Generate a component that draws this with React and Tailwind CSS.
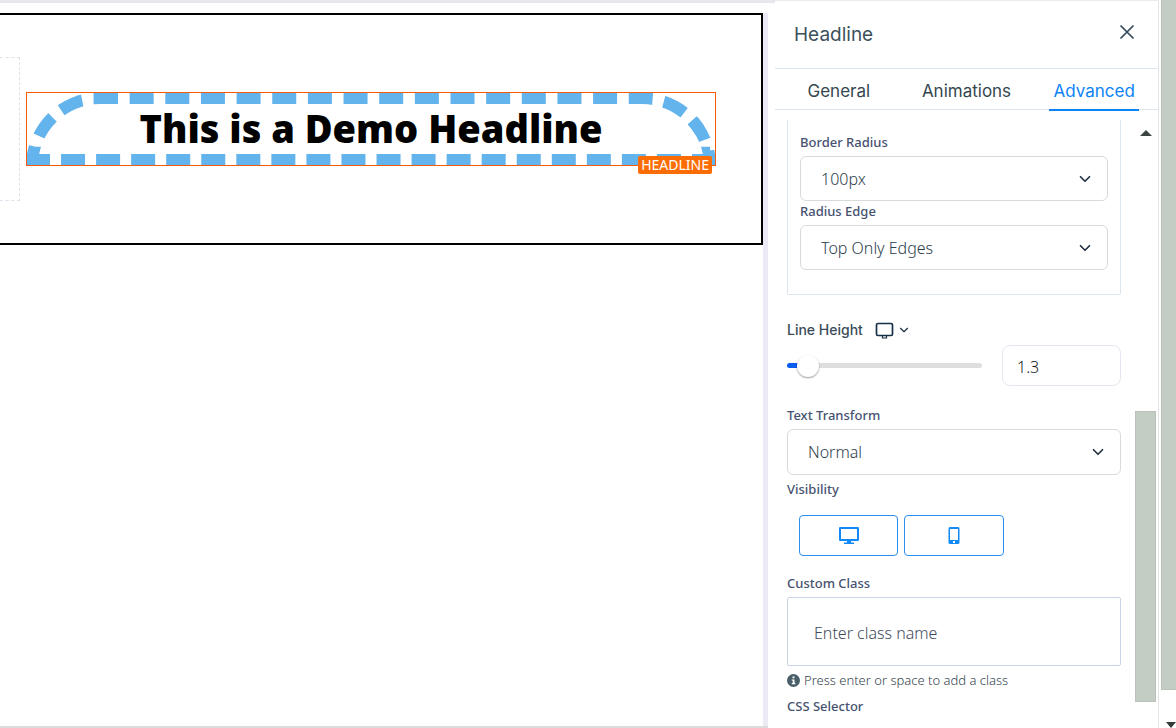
import React, { useState } from 'react';
import { ChevronDown } from 'lucide-react';
import clsx from 'clsx';

const TABS = ['General', 'Animations', 'Advanced'];

function Label({ htmlFor, children }) {
  return (
    <label htmlFor={htmlFor} className="block h-5 text-[13px] leading-5 font-medium text-[#465270]">
      {children}
    </label>
  );
}

function SelectField({ id, label, options, tall }) {
  return (
    <div>
      <Label htmlFor={id}>{label}</Label>
      <div className="relative mt-1">
        <select
          id={id}
          className={clsx(
            'block w-full appearance-none rounded-md border border-[#d9dadc] bg-white pr-12 pl-5 text-base font-light text-[#2c404c]',
            tall ? 'h-[46px]' : 'h-[45px]'
          )}
        >
          {options.map((option) => (
            <option key={option}>{option}</option>
          ))}
        </select>
        <ChevronDown className="pointer-events-none absolute top-3.5 right-3.5 h-[18px] w-[18px] text-[#1f2f3f]" strokeWidth={2.2} />
      </div>
    </div>
  );
}

function Canvas() {
  return (
    <main className="flex min-w-0 flex-1 flex-col border-t-[3px] border-[#e7e8ec]">
      <div className="mr-[7px] flex flex-1 flex-col border-b-2 border-b-[#dcdcdc] pt-2.5">
        <div className="flex flex-1 flex-col border-r-[5px] border-r-[#ecebf5]">
          <section className="flex h-[232px] border-2 border-l-0 border-black">
            <div className="mt-[42px] h-36 w-5 shrink-0 border border-l-0 border-dashed border-[#dfe1ea]" />
            <div className="relative mt-[77px] mr-[45px] ml-1.5 h-[74px] flex-1">
              <h1 className="flex h-full items-center justify-center rounded-t-[100px] border-12 border-dashed border-[#63b3ed] pb-0.5 font-['Open_Sans',sans-serif] text-[38px] leading-none font-extrabold whitespace-nowrap text-black">
                This is a Demo Headline
              </h1>
              <div className="pointer-events-none absolute inset-0 border border-[#f65b08]" />
              <span className="absolute right-1 -bottom-2 rounded-xs bg-[#fb6d04] px-[3px] text-sm leading-[18px] text-white">
                HEADLINE
              </span>
            </div>
          </section>
        </div>
      </div>
    </main>
  );
}

function LineHeight() {
  const [value, setValue] = useState(1.3);
  const fill = ((value - 1) / 5) * 100;

  return (
    <div className="mt-[25px]">
      <div className="flex h-5 items-center font-['Inter',sans-serif] text-[#3b4c58]">
        <label htmlFor="line-height" className="text-sm leading-5 font-medium">Line Height</label>
        <button type="button" aria-label="Device" className="ml-3 flex items-center gap-[3px] text-[#173049]">
          <svg viewBox="0 0 19 17" className="h-[17px] w-[19px]" fill="none" stroke="currentColor">
            <rect x="1.5" y="1.5" width="16" height="12" rx="1.5" strokeWidth="1.7" />
            <path d="M7.5 13.5v2.5h4v-2.5" strokeWidth="1.2" />
          </svg>
          <ChevronDown className="h-3.5 w-3.5" strokeWidth={2} />
        </button>
      </div>
      <div className="mt-[5px] flex items-center justify-between gap-5">
        <input
          id="line-height"
          type="range"
          min="1"
          max="6"
          step="0.1"
          value={value}
          onChange={(e) => setValue(Number(e.target.value))}
          className="h-[5px] min-w-0 flex-1 appearance-none rounded-full [&::-webkit-slider-thumb]:h-[22px] [&::-webkit-slider-thumb]:w-[22px] [&::-webkit-slider-thumb]:appearance-none [&::-webkit-slider-thumb]:rounded-full [&::-webkit-slider-thumb]:bg-white [&::-webkit-slider-thumb]:shadow-[0_1px_2px_rgba(0,0,0,0.4)]"
          style={{ background: `linear-gradient(to right, #0b5cf0 ${fill}%, #dedede ${fill}%)` }}
        />
        <input
          type="text"
          aria-label="Line height value"
          value={value}
          onChange={(e) => setValue(e.target.value)}
          className="h-[41px] w-[119px] rounded-lg border border-[#e6e6f1] px-3.5 pt-0.5 text-base font-light text-[#14181c]"
        />
      </div>
    </div>
  );
}

function Visibility() {
  return (
    <fieldset className="mt-1">
      <legend className="h-5 text-[13px] leading-5 font-medium text-[#465270]">Visibility</legend>
      <div className="mt-4 ml-3 flex gap-1.5 text-[#118af8]">
        <button type="button" aria-label="Desktop" className="flex h-[41px] w-[99px] items-center justify-center rounded border border-[#2a8ff0]">
          <svg viewBox="0 0 20 18" className="h-[18px] w-5" fill="currentColor">
            <path fillRule="evenodd" d="M1 0h18a1 1 0 0 1 1 1v12a1 1 0 0 1-1 1h-7v1.500h3V17H5v-1.500h3V14H1a1 1 0 0 1-1-1V1a1 1 0 0 1 1-1Zm1 2v10h16V2H2Z" />
          </svg>
        </button>
        <button type="button" aria-label="Mobile" className="flex h-[41px] w-[100px] items-center justify-center rounded border border-[#2a8ff0]">
          <svg viewBox="0 0 12 18" className="h-[18px] w-3" fill="currentColor">
            <path fillRule="evenodd" d="M2 0h8a1.500 1.500 0 0 1 1.500 1.500v14A1.500 1.500 0 0 1 10 17H2a1.500 1.500 0 0 1-1.500-1.500v-14A1.500 1.500 0 0 1 2 0Zm0 2v11h8V2H2Zm3 12v2h2v-2H5Z" />
          </svg>
        </button>
      </div>
    </fieldset>
  );
}

function SettingsPanel() {
  const [tab, setTab] = useState('Advanced');

  return (
    <aside className="flex w-[384px] shrink-0 flex-col border-t border-r border-t-[#ebebee] border-r-[#e2e4e8]">
      <header className="flex h-[68px] shrink-0 items-center justify-between border-b border-[#dce4ee] px-[19px] font-['Inter',sans-serif]">
        <h2 className="pt-0.5 text-[19px] text-[#3b505c]">Headline</h2>
        <button type="button" aria-label="Close" className="-mt-1.5 p-1 text-[#34495a]">
          <svg viewBox="0 0 16 16" className="h-4 w-4" fill="none" stroke="currentColor" strokeWidth="1.7">
            <path d="M1.500 1.500l13 13M14.500 1.500l-13 13" />
          </svg>
        </button>
      </header>
      <nav className="grid h-[41px] shrink-0 grid-cols-3 justify-items-center border-b border-[#dce4ee] font-['Inter',sans-serif]">
        {TABS.map((name) => (
          <button
            key={name}
            type="button"
            onClick={() => setTab(name)}
            className={clsx(
              '-mb-0.5 border-b-2 px-1 pt-1.5 text-[17px]',
              tab === name ? 'border-[#0d83f5] text-[#0d83f5]' : 'border-transparent text-[#34474f]'
            )}
          >
            {name}
          </button>
        ))}
      </nav>

      <div className="mt-2.5 flex min-h-0 flex-1">
        <div className="min-w-0 flex-1 overflow-hidden pr-3.5 pl-3">
          <div className="rounded-b-xs border border-t-0 border-[#dde5ec] px-3 pt-3 pb-6">
            <SelectField id="border-radius" label="Border Radius" options={['100px', '50px', '20px', '0px']} />
            <SelectField id="radius-edge" label="Radius Edge" options={['Top Only Edges', 'Bottom Only Edges', 'All Edges']} />
          </div>
          <LineHeight />
          <div className="mt-[19px]">
            <SelectField id="text-transform" label="Text Transform" options={['Normal', 'Uppercase', 'Lowercase']} tall />
          </div>
          <Visibility />
          <div className="mt-[17px]">
            <Label htmlFor="custom-class">Custom Class</Label>
            <input
              id="custom-class"
              type="text"
              placeholder="Enter class name"
              className="mt-1 block h-[69px] w-full rounded-xs border border-[#cbd3e8] px-[26px] pt-0.5 text-base font-light placeholder:text-[#3f4b5c]"
            />
            <p className="mt-1 flex h-5 items-center gap-1 text-[13px] leading-5 font-light text-[#35454e]">
              <svg viewBox="0 0 13 13" className="h-[13px] w-[13px]">
                <circle cx="6.500" cy="6.500" r="6.500" fill="#4a5f69" />
                <path d="M5.500 2.500h2v1.800h-2zM4.800 5.400h2.700v3.600h.9v1.200H4.800V9h.9V6.600h-.9z" fill="#fff" />
              </svg>
              Press enter or space to add a class
            </p>
          </div>
          <div className="mt-1.5">
            <Label>CSS Selector</Label>
          </div>
        </div>
        {/* Panel scrollbar */}
        <div className="mr-0.5 flex w-[21px] shrink-0 flex-col items-center pt-2.5 pb-[26px]">
          <svg viewBox="0 0 12 6" className="h-1.5 w-3 shrink-0">
            <path d="M6 0l6 6H0z" fill="#3d4541" />
          </svg>
          <div className="mt-auto h-[291px] w-full border border-[#b9c1b9] bg-[#c4cdc4]" />
        </div>
      </div>
    </aside>
  );
}

export default function App() {
  return (
    <div className="flex h-screen overflow-hidden bg-white font-['Noto_Sans','Open_Sans',sans-serif]">
      <Canvas />
      <SettingsPanel />
      {/* Page scrollbar */}
      <div className="ml-0.5 flex w-[15px] shrink-0 flex-col items-end justify-between overflow-hidden">
        <div className="h-[690px] w-full border border-t-0 border-r-0 border-[#b9c1b9] bg-[#c4cdc4]" />
        <svg viewBox="0 0 10 6" className="h-1.5 w-2.5 shrink-0">
          <path d="M0 0h10L5 6z" fill="#333b37" />
        </svg>
      </div>
    </div>
  );
}
